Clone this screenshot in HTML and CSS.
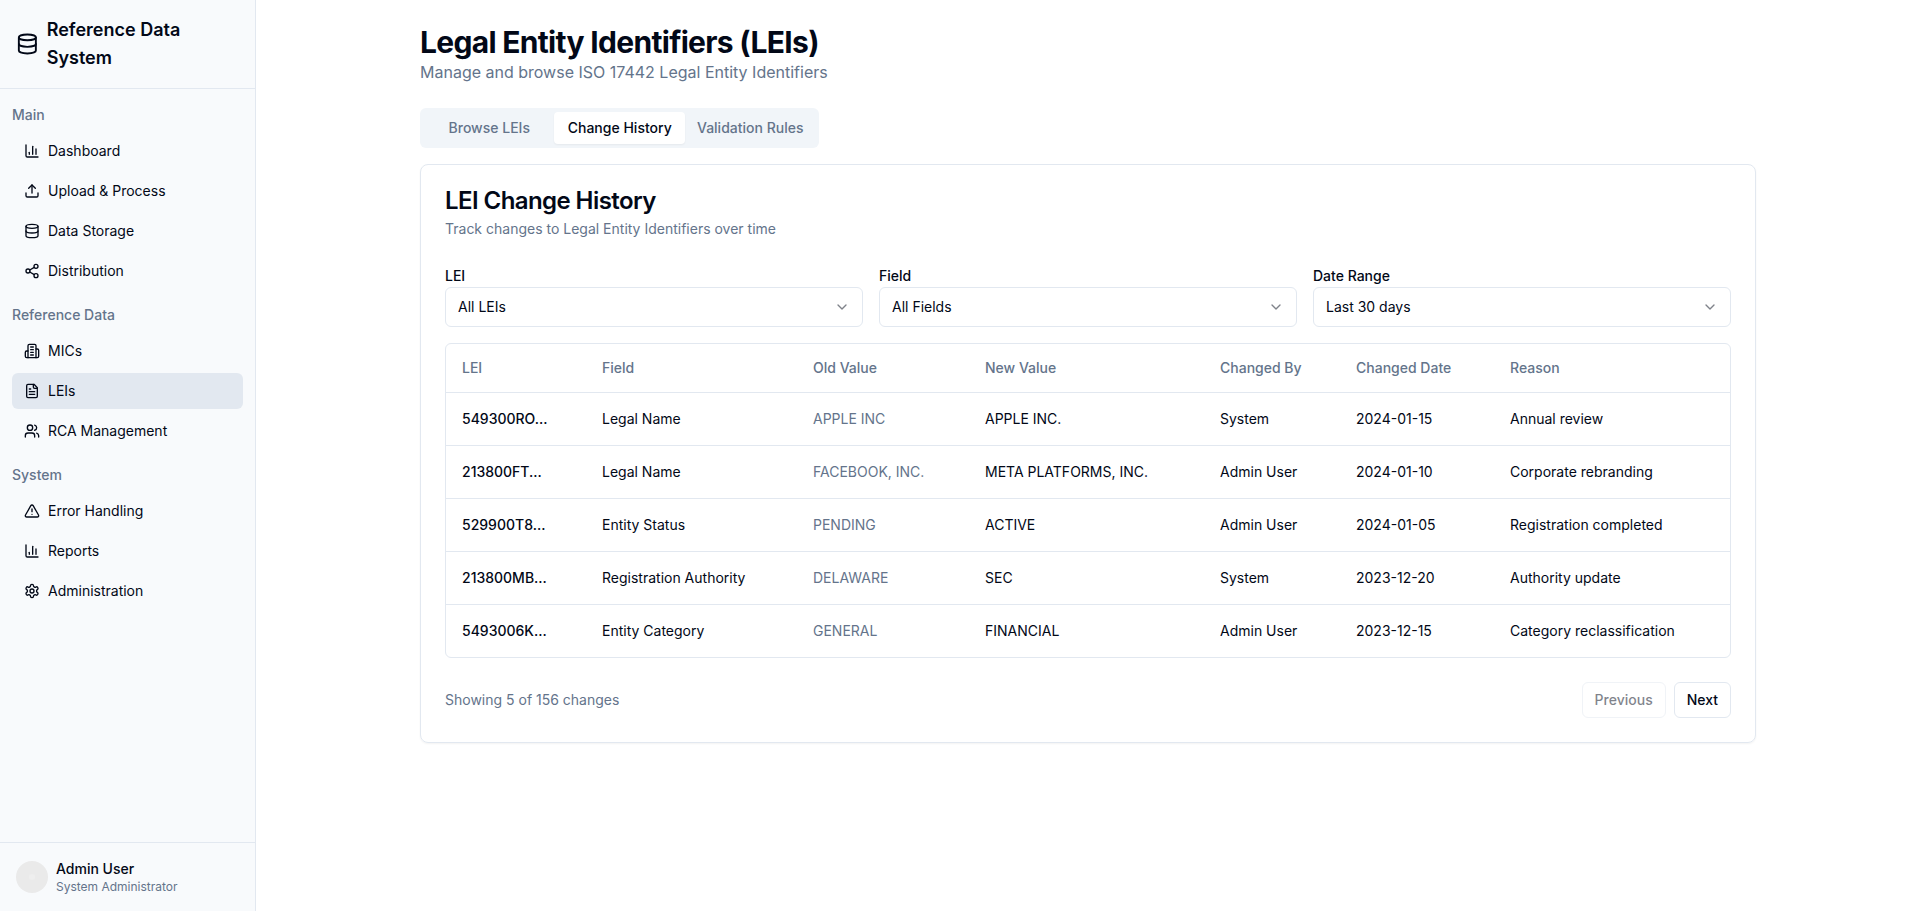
FILE: index.html
```html
<!DOCTYPE html>
<html lang="en">
<head>
<meta charset="utf-8">
<title>Reference Data System</title>
<link rel="stylesheet" href="styles.css">
</head>
<body>
<svg class="sprite" aria-hidden="true">
  <symbol id="database" viewBox="0 0 24 24"><ellipse cx="12" cy="5" rx="9" ry="3"/><path d="M3 5V19A9 3 0 0 0 21 19V5"/><path d="M3 12A9 3 0 0 0 21 12"/></symbol>
  <symbol id="chart" viewBox="0 0 24 24"><path d="M3 3v16a2 2 0 0 0 2 2h16"/><path d="M18 17V9"/><path d="M13 17V5"/><path d="M8 17v-3"/></symbol>
  <symbol id="upload" viewBox="0 0 24 24"><path d="M21 15v4a2 2 0 0 1-2 2H5a2 2 0 0 1-2-2v-4"/><path d="m17 8-5-5-5 5"/><path d="M12 3v12"/></symbol>
  <symbol id="share" viewBox="0 0 24 24"><circle cx="18" cy="5" r="3"/><circle cx="6" cy="12" r="3"/><circle cx="18" cy="19" r="3"/><path d="m8.59 13.51 6.83 3.98"/><path d="m15.41 6.51-6.82 3.98"/></symbol>
  <symbol id="building" viewBox="0 0 24 24"><path d="M6 22V4a2 2 0 0 1 2-2h8a2 2 0 0 1 2 2v18Z"/><path d="M6 12H4a2 2 0 0 0-2 2v6a2 2 0 0 0 2 2h2"/><path d="M18 9h2a2 2 0 0 1 2 2v9a2 2 0 0 1-2 2h-2"/><path d="M10 6h4"/><path d="M10 10h4"/><path d="M10 14h4"/><path d="M10 18h4"/></symbol>
  <symbol id="file" viewBox="0 0 24 24"><path d="M15 2H6a2 2 0 0 0-2 2v16a2 2 0 0 0 2 2h12a2 2 0 0 0 2-2V7Z"/><path d="M14 2v4a2 2 0 0 0 2 2h4"/><path d="M10 9H8"/><path d="M16 13H8"/><path d="M16 17H8"/></symbol>
  <symbol id="users" viewBox="0 0 24 24"><path d="M16 21v-2a4 4 0 0 0-4-4H6a4 4 0 0 0-4 4v2"/><circle cx="9" cy="7" r="4"/><path d="M22 21v-2a4 4 0 0 0-3-3.87"/><path d="M16 3.13a4 4 0 0 1 0 7.75"/></symbol>
  <symbol id="alert" viewBox="0 0 24 24"><path d="m21.73 18-8-14a2 2 0 0 0-3.48 0l-8 14A2 2 0 0 0 4 21h16a2 2 0 0 0 1.73-3"/><path d="M12 9v4"/><path d="M12 17h.01"/></symbol>
  <symbol id="settings" viewBox="0 0 24 24"><path d="M12.22 2h-.44a2 2 0 0 0-2 2v.18a2 2 0 0 1-1 1.73l-.43.25a2 2 0 0 1-2 0l-.15-.08a2 2 0 0 0-2.73.73l-.22.38a2 2 0 0 0 .73 2.73l.15.1a2 2 0 0 1 1 1.72v.51a2 2 0 0 1-1 1.74l-.15.09a2 2 0 0 0-.73 2.73l.22.38a2 2 0 0 0 2.73.73l.15-.08a2 2 0 0 1 2 0l.43.25a2 2 0 0 1 1 1.73V20a2 2 0 0 0 2 2h.44a2 2 0 0 0 2-2v-.18a2 2 0 0 1 1-1.73l.43-.25a2 2 0 0 1 2 0l.15.08a2 2 0 0 0 2.73-.73l.22-.39a2 2 0 0 0-.73-2.73l-.15-.08a2 2 0 0 1-1-1.74v-.5a2 2 0 0 1 1-1.74l.15-.09a2 2 0 0 0 .73-2.73l-.22-.38a2 2 0 0 0-2.73-.73l-.15.08a2 2 0 0 1-2 0l-.43-.25a2 2 0 0 1-1-1.73V4a2 2 0 0 0-2-2z"/><circle cx="12" cy="12" r="3"/></symbol>
  <symbol id="chevron" viewBox="0 0 24 24"><path d="m6 9 6 6 6-6"/></symbol>
</svg>
<div class="app">
  <aside class="sidebar">
    <div class="brand"><svg class="brand-icon"><use href="#database"/></svg><span>Reference Data System</span></div>
    <nav class="nav">
      <section class="nav-group">
        <h2 class="nav-label">Main</h2>
        <a class="nav-item"><svg class="icon"><use href="#chart"/></svg>Dashboard</a>
        <a class="nav-item"><svg class="icon"><use href="#upload"/></svg>Upload &amp; Process</a>
        <a class="nav-item"><svg class="icon"><use href="#database"/></svg>Data Storage</a>
        <a class="nav-item"><svg class="icon"><use href="#share"/></svg>Distribution</a>
      </section>
      <section class="nav-group">
        <h2 class="nav-label">Reference Data</h2>
        <a class="nav-item"><svg class="icon"><use href="#building"/></svg>MICs</a>
        <a class="nav-item active"><svg class="icon"><use href="#file"/></svg>LEIs</a>
        <a class="nav-item"><svg class="icon"><use href="#users"/></svg>RCA Management</a>
      </section>
      <section class="nav-group">
        <h2 class="nav-label">System</h2>
        <a class="nav-item"><svg class="icon"><use href="#alert"/></svg>Error Handling</a>
        <a class="nav-item"><svg class="icon"><use href="#chart"/></svg>Reports</a>
        <a class="nav-item"><svg class="icon"><use href="#settings"/></svg>Administration</a>
      </section>
    </nav>
    <div class="account">
      <div class="avatar"><span class="avatar-dot"></span></div>
      <div><p class="account-name">Admin User</p><p class="account-role">System Administrator</p></div>
    </div>
  </aside>
  <main class="main">
    <div class="container">
      <h1 class="title">Legal Entity Identifiers (LEIs)</h1>
      <p class="subtitle">Manage and browse ISO 17442 Legal Entity Identifiers</p>
      <div class="tabs">
        <button class="tab">Browse LEIs</button>
        <button class="tab selected">Change History</button>
        <button class="tab">Validation Rules</button>
      </div>
      <section class="card">
        <h3 class="card-title">LEI Change History</h3>
        <p class="card-text">Track changes to Legal Entity Identifiers over time</p>
        <div class="filters">
          <div><label class="field-label">LEI</label><button class="select">All LEIs<svg class="icon"><use href="#chevron"/></svg></button></div>
          <div><label class="field-label">Field</label><button class="select">All Fields<svg class="icon"><use href="#chevron"/></svg></button></div>
          <div><label class="field-label">Date Range</label><button class="select">Last 30 days<svg class="icon"><use href="#chevron"/></svg></button></div>
        </div>
        <div class="table-wrap">
          <table class="table">
            <colgroup><col class="col-lei"><col class="col-field"><col class="col-old"><col class="col-new"><col class="col-by"><col class="col-date"><col></colgroup>
            <thead><tr><th>LEI</th><th>Field</th><th>Old Value</th><th>New Value</th><th>Changed By</th><th>Changed Date</th><th>Reason</th></tr></thead>
            <tbody>
              <tr><td class="lei">549300RO...</td><td>Legal Name</td><td class="old">APPLE INC</td><td>APPLE INC.</td><td>System</td><td>2024-01-15</td><td>Annual review</td></tr>
              <tr><td class="lei">213800FT...</td><td>Legal Name</td><td class="old">FACEBOOK, INC.</td><td>META PLATFORMS, INC.</td><td>Admin User</td><td>2024-01-10</td><td>Corporate rebranding</td></tr>
              <tr><td class="lei">529900T8...</td><td>Entity Status</td><td class="old">PENDING</td><td>ACTIVE</td><td>Admin User</td><td>2024-01-05</td><td>Registration completed</td></tr>
              <tr><td class="lei">213800MB...</td><td>Registration Authority</td><td class="old">DELAWARE</td><td>SEC</td><td>System</td><td>2023-12-20</td><td>Authority update</td></tr>
              <tr><td class="lei">5493006K...</td><td>Entity Category</td><td class="old">GENERAL</td><td>FINANCIAL</td><td>Admin User</td><td>2023-12-15</td><td>Category reclassification</td></tr>
            </tbody>
          </table>
        </div>
        <div class="pager">
          <p class="pager-text">Showing 5 of 156 changes</p>
          <div class="pager-buttons"><button class="btn" disabled>Previous</button><button class="btn">Next</button></div>
        </div>
      </section>
    </div>
  </main>
</div>
</body>
</html>
```
FILE: styles.css
```css
*, *::before, *::after { box-sizing: border-box; }
body, h1, h2, h3, p { margin: 0; }
body {
  font-family: Inter, "Liberation Sans", sans-serif;
  font-size: 16px;
  line-height: 24px;
  color: #020817;
  background: #fff;
}
button { margin: 0; font: inherit; color: inherit; background: none; border: 0; }
svg { fill: none; stroke: currentColor; stroke-width: 2; stroke-linecap: round; stroke-linejoin: round; }
.sprite { display: none; }
.icon { width: 16px; height: 16px; flex-shrink: 0; }

.app { display: flex; height: 100vh; }

.sidebar {
  display: flex;
  flex-direction: column;
  width: 256px;
  flex-shrink: 0;
  background: #f8fafc;
  border-right: 1px solid #e2e8f0;
}
.brand {
  display: flex;
  align-items: center;
  gap: 8px;
  padding: 16px;
  border-bottom: 1px solid #e2e8f0;
  font-size: 18px;
  font-weight: 600;
  line-height: 28px;
}
.brand-icon { width: 24px; height: 24px; }
.nav { flex: 1; display: flex; flex-direction: column; gap: 16px; padding: 16px 12px; }
.nav-group { display: flex; flex-direction: column; gap: 4px; }
.nav-label { margin-bottom: 4px; font-size: 14px; font-weight: 500; line-height: 20px; color: #64748b; }
.nav-item {
  display: flex;
  align-items: center;
  gap: 8px;
  height: 36px;
  padding: 0 12px;
  border-radius: 6px;
  font-size: 14px;
  line-height: 20px;
}
.nav-item.active { background: #e2e8f0; }
.account { display: flex; align-items: center; gap: 8px; padding: 16px; border-top: 1px solid #e2e8f0; }
.avatar { display: flex; align-items: center; justify-content: center; width: 32px; height: 32px; border-radius: 50%; background: #eaeaea; }
.avatar-dot { width: 6px; height: 6px; border-radius: 50%; background: #eee; }
.account-name { font-size: 14px; font-weight: 500; line-height: 20px; }
.account-role { font-size: 12px; line-height: 16px; color: #64748b; }

.main { flex: 1; overflow: hidden; }
.container { max-width: 1400px; margin: 0 auto; padding: 24px 32px; }
.title { font-size: 30px; font-weight: 700; line-height: 36px; letter-spacing: -0.69px; }
.subtitle { color: #64748b; }
.tabs {
  display: inline-grid;
  grid-template-columns: repeat(3, 1fr);
  margin-top: 24px;
  padding: 4px;
  border-radius: 6px;
  background: #f1f5f9;
  vertical-align: top;
}
.tab { height: 32px; padding: 0 12px; border-radius: 4px; font-size: 14px; font-weight: 500; line-height: 20px; color: #64748b; white-space: nowrap; }
.tab.selected { background: #fff; color: #020817; box-shadow: 0 1px 2px rgba(0, 0, 0, .05); }

.card { margin-top: 16px; padding: 24px; border: 1px solid #e2e8f0; border-radius: 8px; box-shadow: 0 1px 2px rgba(0, 0, 0, .05); }
.card-title { font-size: 24px; font-weight: 600; line-height: 24px; letter-spacing: -0.57px; }
.card-text { margin-top: 6px; font-size: 14px; line-height: 20px; color: #64748b; }
.filters { display: grid; grid-template-columns: repeat(3, 1fr); gap: 16px; margin-top: 24px; }
.field-label { font-size: 14px; font-weight: 500; line-height: 20px; }
.select {
  display: flex;
  align-items: center;
  justify-content: space-between;
  width: 100%;
  height: 40px;
  padding: 0 12px;
  border: 1px solid #e2e8f0;
  border-radius: 6px;
  font-size: 14px;
  line-height: 20px;
}
.select .icon { opacity: .5; }

.table-wrap { margin-top: 16px; border: 1px solid #e2e8f0; border-radius: 6px; }
.table { width: 100%; table-layout: fixed; border-collapse: collapse; font-size: 14px; line-height: 20px; }
.col-lei { width: 140px; }
.col-field { width: 211px; }
.col-old { width: 172px; }
.col-new { width: 235px; }
.col-by { width: 136px; }
.col-date { width: 154px; }
.table tr { border-bottom: 1px solid #e2e8f0; }
.table tbody tr:last-child { border-bottom: 0; }
.table th { height: 48px; padding: 0 16px; font-weight: 500; text-align: left; color: #64748b; }
.table td { padding: 16px; }
.table .lei { font-weight: 500; }
.table .old { color: #64748b; }

.pager { display: flex; align-items: center; justify-content: space-between; margin-top: 24px; }
.pager-text { font-size: 14px; line-height: 20px; color: #64748b; }
.pager-buttons { display: flex; gap: 8px; }
.btn { height: 36px; padding: 0 12px; border: 1px solid #e2e8f0; border-radius: 6px; font-size: 14px; font-weight: 500; line-height: 20px; }
.btn:disabled { opacity: .5; }
```
